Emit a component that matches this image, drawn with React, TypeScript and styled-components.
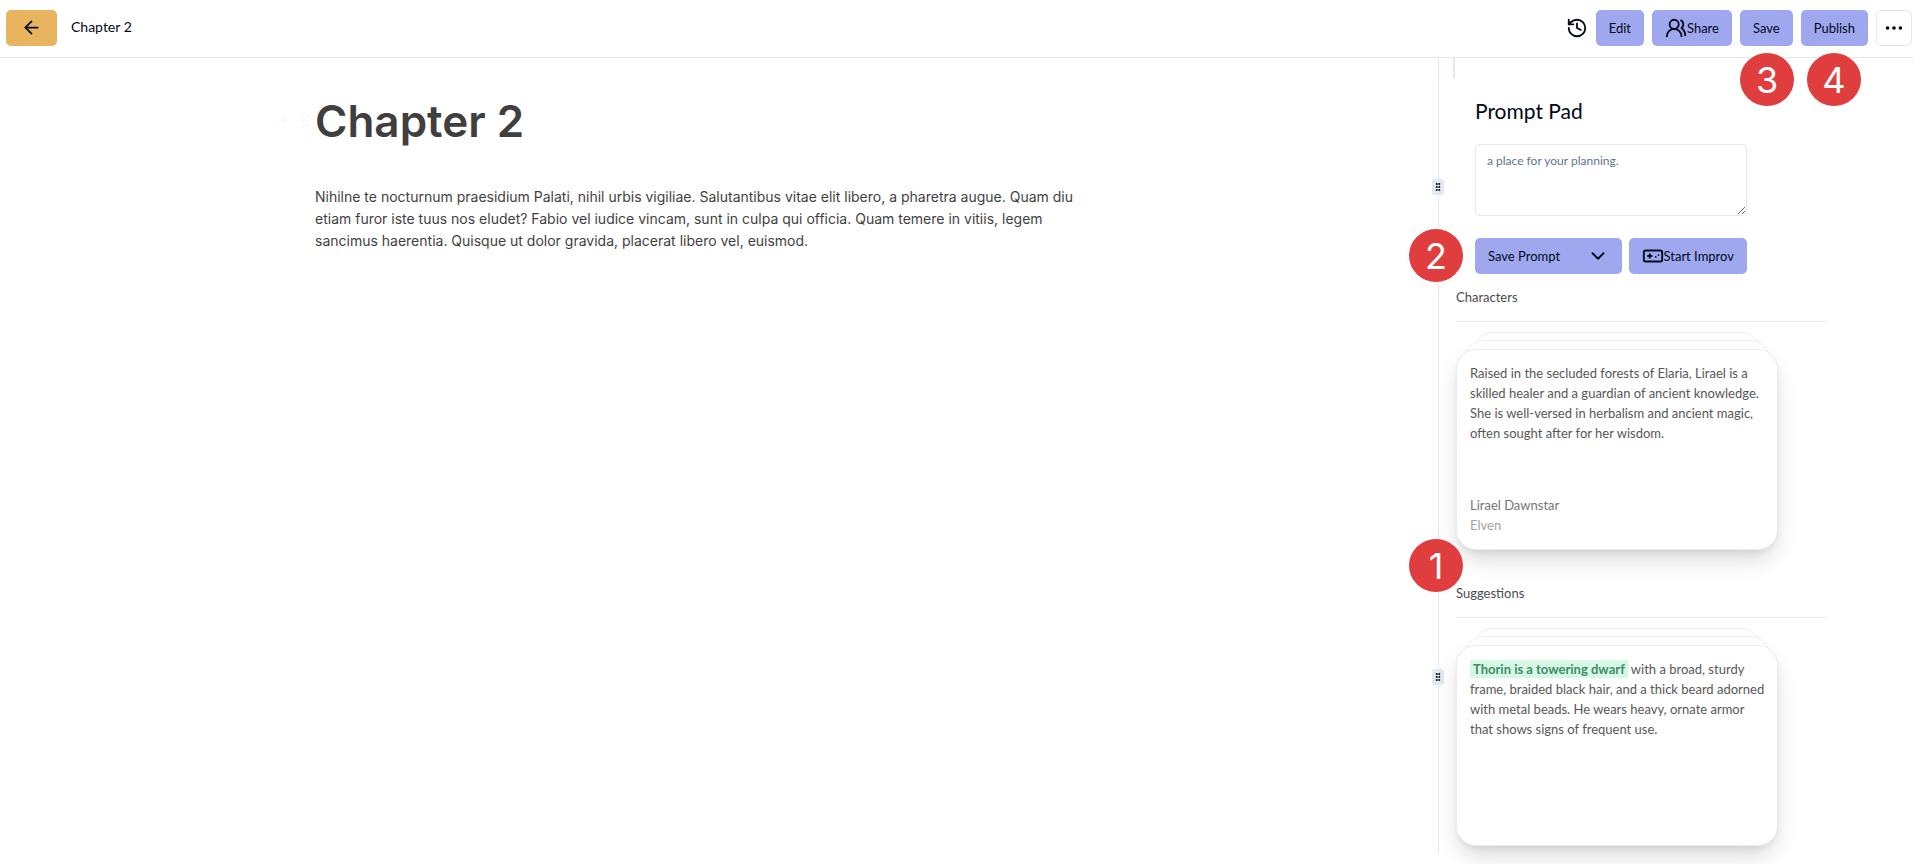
import React from "react";
import styled, { createGlobalStyle } from "styled-components";
import { ArrowLeft, ChevronDown, Ellipsis, GripVertical, History, Plus, UsersRound } from "lucide-react";

const sans = `Lato, "Liberation Sans", sans-serif`;

const GlobalStyle = createGlobalStyle`
  *, *::before, *::after { box-sizing: border-box; }
  html, body, #root { height: 100%; }
  body { margin: 0; background: #fff; color: #020817; font-family: ${sans}; }
  h1, h2, h3, p { margin: 0; }
  button, textarea { font: inherit; color: inherit; }
`;

const Page = styled.div`
  min-height: 100%;
  display: flex;
  flex-direction: column;
`;

const Header = styled.header`
  position: relative;
  display: flex;
  align-items: center;
  gap: 14px;
  height: 58px;
  padding: 0 1px 2px 6px;
  border-bottom: 1px solid #e2e8f0;
`;

const DocTitle = styled.span`
  flex: 1;
  font-size: 14px;
  line-height: 20px;
  padding-bottom: 2px;
`;

const Actions = styled.div`
  display: flex;
  align-items: center;
  gap: 8px;
`;

type Tone = "primary" | "amber" | "outline" | "ghost";

const fills: Record<Tone, string> = {
  primary: "#9fa8ef",
  amber: "#e8b45f",
  outline: "#fff",
  ghost: "transparent",
};

const paddings: Record<Tone, number> = { primary: 13, amber: 15, outline: 6, ghost: 0 };

const Button = styled.button<{ $tone?: Tone; $wide?: boolean }>`
  display: inline-flex;
  align-items: center;
  justify-content: ${(p) => (p.$wide ? "space-between" : "center")};
  flex: ${(p) => (p.$wide ? "1" : "none")};
  height: 36px;
  padding: 0 ${(p) => paddings[p.$tone ?? "primary"]}px;
  border: ${(p) => (p.$tone === "outline" ? "1px solid #e2e8f0" : "0")};
  border-radius: 5px;
  background: ${(p) => fills[p.$tone ?? "primary"]};
  font-size: 13px;
  white-space: nowrap;
  cursor: pointer;
`;

const Badge = styled.span<{ $left?: string; $top: string; $right?: string }>`
  position: absolute;
  left: ${(p) => p.$left ?? "auto"};
  right: ${(p) => p.$right ?? "auto"};
  top: ${(p) => p.$top};
  z-index: 2;
  display: flex;
  align-items: center;
  justify-content: center;
  width: 54px;
  height: 53px;
  border-radius: 50%;
  background: #e03e3e;
  color: #fff;
  font: 36px Inter, sans-serif;
`;

const Body = styled.div`
  flex: 1;
  display: flex;
`;

const Editor = styled.main`
  flex: 1;
  min-width: 0;
  padding: 35px 0 0 274px;
  color: #3f3f3f;
  font-family: Inter, sans-serif;
`;

const HeadingRow = styled.div`
  display: flex;
  align-items: center;
`;

const BlockTools = styled.div`
  display: flex;
  align-items: center;
  gap: 4px;
  width: 41px;
  color: #f1f1f1;
`;

const Heading = styled.h1`
  font-size: 44px;
  line-height: 56px;
  font-weight: 600;
`;

const Paragraph = styled.p`
  max-width: 780px;
  margin: 37px 0 0 41px;
  font-size: 14px;
  line-height: 22px;
`;

const Divider = styled.div`
  position: relative;
  width: 1px;
  margin-bottom: 10px;
  background: #e2e8f0;
`;

const Handle = styled.span<{ $top: string }>`
  position: absolute;
  top: ${(p) => p.$top};
  left: -6px;
  display: flex;
  align-items: center;
  justify-content: center;
  width: 12px;
  height: 16px;
  border-radius: 3px;
  background: #e2e8f0;
`;

const Sidebar = styled.aside`
  width: 474px;
  padding-left: 14px;
`;

const Tick = styled.div`
  width: 2px;
  height: 20px;
  background: #e2e8f0;
`;

const Pad = styled.section`
  width: 294px;
  padding: 17px 0 0 22px;
`;

const PadTitle = styled.h2`
  font-size: 21px;
  line-height: 32px;
  font-weight: 400;
`;

const PadInput = styled.textarea`
  display: block;
  width: 100%;
  height: 72px;
  margin: 17px 0 22px;
  padding: 6px 11px;
  border: 1px solid #e2e8f0;
  border-radius: 5px;
  font-size: 12px;
  line-height: 20px;
  &::placeholder { color: #64748b; opacity: 1; }
`;

const PadActions = styled.div`
  display: flex;
  gap: 7px;
`;

const Section = styled.section`
  width: 375px;
  padding: 12px 0 0 3px;
  & + & { margin-top: 20px; }
`;

const SectionTitle = styled.h3`
  height: 36px;
  border-bottom: 1px solid #eceef7;
  color: #4b4b50;
  font-size: 13px;
  line-height: 22px;
  font-weight: 400;
`;

const Stack = styled.div`
  width: 322px;
  padding-top: 10px;
`;

const Sheet = styled.div<{ $inset: number }>`
  height: 36px;
  margin: 0 ${(p) => p.$inset}px -28px;
  border: 1px solid #ededed;
  border-radius: 20px;
  background: #fff;
  & + & { margin-bottom: -27px; }
`;

const Card = styled.article`
  position: relative;
  display: flex;
  flex-direction: column;
  justify-content: space-between;
  height: 201px;
  padding: 13px 9px 14px 13px;
  border: 1px solid #ededed;
  border-radius: 20px;
  background: #fff;
  box-shadow: 0 12px 24px -4px rgba(0, 0, 0, 0.16), 0 4px 8px -4px rgba(0, 0, 0, 0.12);
  color: #575757;
  font-size: 13px;
  line-height: 20px;
`;

const Mark = styled.mark`
  padding: 1px 3px;
  background: #d6f8e4;
  color: #3f8c68;
  font-weight: 700;
`;

const Person = styled.div`
  color: #757575;
`;

const Kind = styled.p`
  color: #a3a3a3;
`;

const ControllerIcon = () => (
  <svg width="22" height="22" viewBox="0 0 24 24" fill="none" stroke="currentColor" strokeWidth="2" strokeLinecap="round" strokeLinejoin="round" aria-hidden="true">
    <rect x="2" y="6" width="20" height="12" rx="2" />
    <path d="M6.5 12h4M8.5 10v4" />
    <path d="M15 13v.01M18 11v.01" />
  </svg>
);

const CardStack = ({ children }: { children: React.ReactNode }) => (
  <Stack>
    <Sheet $inset={18} />
    <Sheet $inset={9} />
    <Card>{children}</Card>
  </Stack>
);

export default function App() {
  return (
    <Page>
      <GlobalStyle />
      <Header>
        <Button $tone="amber" aria-label="Back"><ArrowLeft size={21} /></Button>
        <DocTitle>Chapter 2</DocTitle>
        <Actions>
          <Button $tone="ghost" aria-label="Version history"><History size={22} /></Button>
          <Button>Edit</Button>
          <Button><UsersRound size={22} />Share</Button>
          <Button>Save</Button>
          <Button>Publish</Button>
          <Button $tone="outline" aria-label="More"><Ellipsis size={22} strokeWidth={2} fill="currentColor" /></Button>
        </Actions>
        <Badge $right="119px" $top="53px">3</Badge>
        <Badge $right="52px" $top="53px">4</Badge>
      </Header>
      <Body>
        <Editor>
          <HeadingRow>
            <BlockTools>
              <Plus size={18} strokeWidth={1} />
              <GripVertical size={18} strokeWidth={1} />
            </BlockTools>
            <Heading>Chapter 2</Heading>
          </HeadingRow>
          <Paragraph>
            Nihilne te nocturnum praesidium Palati, nihil urbis vigiliae. Salutantibus vitae elit libero, a pharetra augue. Quam diu etiam furor iste tuus nos eludet? Fabio vel iudice vincam, sunt in culpa qui officia. Quam temere in vitiis, legem sancimus haerentia. Quisque ut dolor gravida, placerat libero vel, euismod.
          </Paragraph>
        </Editor>
        <Divider>
          <Handle $top="121px"><GripVertical size={10} strokeWidth={3} /></Handle>
          <Handle $top="611px"><GripVertical size={10} strokeWidth={3} /></Handle>
          <Badge $left="-29px" $top="171px">2</Badge>
          <Badge $left="-29px" $top="481px">1</Badge>
        </Divider>
        <Sidebar>
          <Tick />
          <Pad>
            <PadTitle>Prompt Pad</PadTitle>
            <PadInput aria-label="Prompt" placeholder="a place for your planning." />
            <PadActions>
              <Button $wide>Save Prompt <ChevronDown size={22} /></Button>
              <Button><ControllerIcon />Start Improv</Button>
            </PadActions>
          </Pad>
          <Section>
            <SectionTitle>Characters</SectionTitle>
            <CardStack>
              <p>Raised in the secluded forests of Elaria, Lirael is a skilled healer and a guardian of ancient knowledge. She is well-versed in herbalism and ancient magic, often sought after for her wisdom.</p>
              <Person>Lirael Dawnstar<Kind>Elven</Kind></Person>
            </CardStack>
          </Section>
          <Section>
            <SectionTitle>Suggestions</SectionTitle>
            <CardStack>
              <p><Mark>Thorin is a towering dwarf</Mark> with a broad, sturdy frame, braided black hair, and a thick beard adorned with metal beads. He wears heavy, ornate armor that shows signs of frequent use.</p>
            </CardStack>
          </Section>
        </Sidebar>
      </Body>
    </Page>
  );
}
